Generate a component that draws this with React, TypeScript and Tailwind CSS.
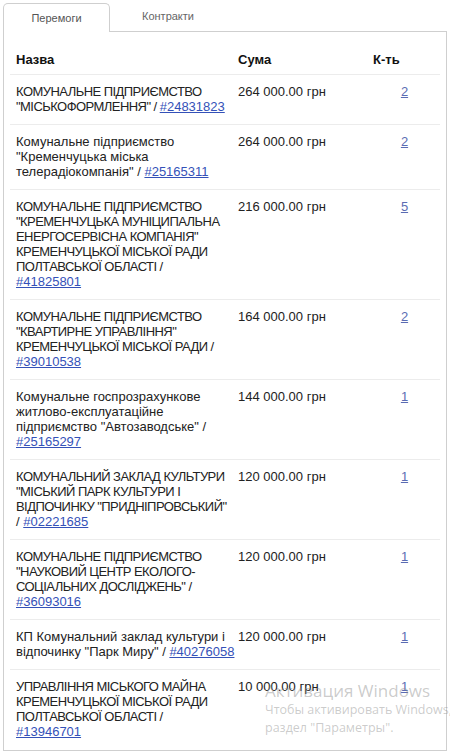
import React from "react";

type Line = [string, string?];
type Row = { lines: Line[]; amount: string; count: string };

const rows: Row[] = [
  { lines: [["КОМУНАЛЬНЕ ПІДПРИЄМСТВО"], ['"МІСЬКОФОРМЛЕННЯ" / ', "#24831823"]], amount: "264 000.00 грн", count: "2" },
  { lines: [["Комунальне підприємство"], ['"Кременчуцька міська'], ['телерадіокомпанія" / ', "#25165311"]], amount: "264 000.00 грн", count: "2" },
  { lines: [["КОМУНАЛЬНЕ ПІДПРИЄМСТВО"], ['"КРЕМЕНЧУЦЬКА МУНІЦИПАЛЬНА'], ['ЕНЕРГОСЕРВІСНА КОМПАНІЯ"'], ["КРЕМЕНЧУЦЬКОЇ МІСЬКОЇ РАДИ"], ["ПОЛТАВСЬКОЇ ОБЛАСТІ /"], ["", "#41825801"]], amount: "216 000.00 грн", count: "5" },
  { lines: [["КОМУНАЛЬНЕ ПІДПРИЄМСТВО"], ['"КВАРТИРНЕ УПРАВЛІННЯ"'], ["КРЕМЕНЧУЦЬКОЇ МІСЬКОЇ РАДИ /"], ["", "#39010538"]], amount: "164 000.00 грн", count: "2" },
  { lines: [["Комунальне госпрозрахункове"], ["житлово-експлуатаційне"], ['підприємство "Автозаводське" /'], ["", "#25165297"]], amount: "144 000.00 грн", count: "1" },
  { lines: [["КОМУНАЛЬНИЙ ЗАКЛАД КУЛЬТУРИ"], ['"МІСЬКИЙ ПАРК КУЛЬТУРИ І'], ['ВІДПОЧИНКУ "ПРИДНІПРОВСЬКИЙ"'], ["/ ", "#02221685"]], amount: "120 000.00 грн", count: "1" },
  { lines: [["КОМУНАЛЬНЕ ПІДПРИЄМСТВО"], ['"НАУКОВИЙ ЦЕНТР ЕКОЛОГО-'], ['СОЦІАЛЬНИХ ДОСЛІДЖЕНЬ" /'], ["", "#36093016"]], amount: "120 000.00 грн", count: "1" },
  { lines: [["КП Комунальний заклад культури і"], ['відпочинку "Парк Миру" / ', "#40276058"]], amount: "120 000.00 грн", count: "1" },
  { lines: [["УПРАВЛІННЯ МІСЬКОГО МАЙНА"], ["КРЕМЕНЧУЦЬКОЇ МІСЬКОЇ РАДИ"], ["ПОЛТАВСЬКОЇ ОБЛАСТІ /"], ["", "#13946701"]], amount: "10 000.00 грн", count: "1" },
];

function isCaps(s: string) {
  return s.length > 0 && s === s.toUpperCase() && /[А-ЯІЇЄ]/.test(s);
}

export default function App() {
  return (
    <div
      className="relative w-[450px] h-[755px] bg-white overflow-hidden text-[#222]"
      style={{ fontFamily: '"Liberation Sans", Arial, sans-serif' }}
    >
      <div className="pt-[2px] pl-[3px] pr-[3px]">
        {/* Tabs */}
        <div className="flex items-end h-[29px]">
          <div className="relative z-10 w-[107px] h-[29px] bg-white border border-b-0 border-[#cfcfcf] rounded-t-[5px] flex items-center justify-center text-[11px] text-[#555] -mb-px">
            Перемоги
          </div>
          <div className="h-[29px] flex items-center pl-[32px] text-[11px] text-[#666]">
            Контракти
          </div>
        </div>
        {/* Panel */}
        <div className="border border-[#cfcfcf] h-[720px] px-[6px] pt-[9px]">
          <div className="grid grid-cols-[222px_135px_73px] border-b border-[#ececec] text-[13px] leading-[15px] font-bold text-[#111]">
            <div className="pl-[6px] pt-[11px] pb-[7px]">Назва</div>
            <div className="pl-[6px] pt-[11px] pb-[7px]">Сума</div>
            <div className="pl-[6px] pt-[11px] pb-[7px]">К-ть</div>
          </div>
          {rows.map((r, i) => (
            <div
              key={i}
              className={`grid grid-cols-[222px_135px_73px] text-[13px] leading-[15px] text-[#222] ${i < rows.length - 1 ? "border-b border-[#ececec]" : ""}`}
            >
              <div className="pl-[6px] pt-[9px] pb-[10px] whitespace-nowrap">
                {r.lines.map(([t, link], j) => (
                  <div key={j}>
                    {t && (
                      <span className={isCaps(t) ? "tracking-[-0.55px]" : ""}>{t}</span>
                    )}
                    {link && (
                      <a href="#" className="text-[#3451b8] underline">{link}</a>
                    )}
                  </div>
                ))}
              </div>
              <div className="pl-[6px] pt-[9px] pb-[10px] whitespace-nowrap">{r.amount}</div>
              <div className="pt-[9px] pb-[10px] text-center pl-[2px]">
                <a href="#" className="text-[#5b6cb3] underline">{r.count}</a>
              </div>
            </div>
          ))}
        </div>
      </div>
      {/* Windows activation watermark */}
      <div
        className="absolute left-[265px] top-[680px] pointer-events-none text-[rgba(140,140,140,0.45)] whitespace-nowrap"
        style={{ fontFamily: '"Open Sans", "Noto Sans", sans-serif' }}
      >
        <div className="text-[17px] leading-[21px]">Активация Windows</div>
        <div className="text-[12.5px] leading-[18px]">Чтобы активировать Windows, перейдите в</div>
        <div className="text-[12.5px] leading-[18px]">раздел "Параметры".</div>
      </div>
    </div>
  );
}
